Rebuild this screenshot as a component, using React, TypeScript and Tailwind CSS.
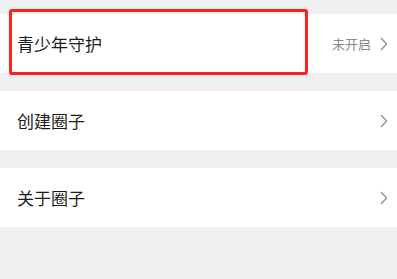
import React from 'react';

const rows = [
  { label: '青少年守护', value: '未开启' },
  { label: '创建圈子' },
  { label: '关于圈子' },
];

const Chevron = () => (
  <svg width="8" height="14" viewBox="0 0 8 14" fill="none" className="shrink-0">
    <path d="M1.5 1.5 L6.5 7 L1.5 12.5" stroke="#9a9a9a" strokeWidth="1.6" strokeLinecap="round" strokeLinejoin="round" />
  </svg>
);

export default function App() {
  return (
    <div
      className="relative w-[397px] h-[279px] overflow-hidden bg-[#f0f0f3] pt-[14px] flex flex-col gap-[18px]"
      style={{ fontFamily: '"Noto Sans CJK SC", "Noto Sans", sans-serif' }}
    >
      {rows.map((r) => (
        <div key={r.label} className="h-[59px] bg-white flex items-center pl-[17px] pr-[9px]">
          <span className="text-[17px] text-[#1c1c1c] leading-none">{r.label}</span>
          <div className="ml-auto flex items-center gap-[9px]">
            {r.value && <span className="text-[13px] text-[#8a8a8a] leading-none">{r.value}</span>}
            <Chevron />
          </div>
        </div>
      ))}
      {/* annotation box */}
      <div className="absolute left-[9px] top-[9px] w-[299px] h-[66px] border-[3px] border-[#ff1f1f] rounded-[3px]" />
    </div>
  );
}
